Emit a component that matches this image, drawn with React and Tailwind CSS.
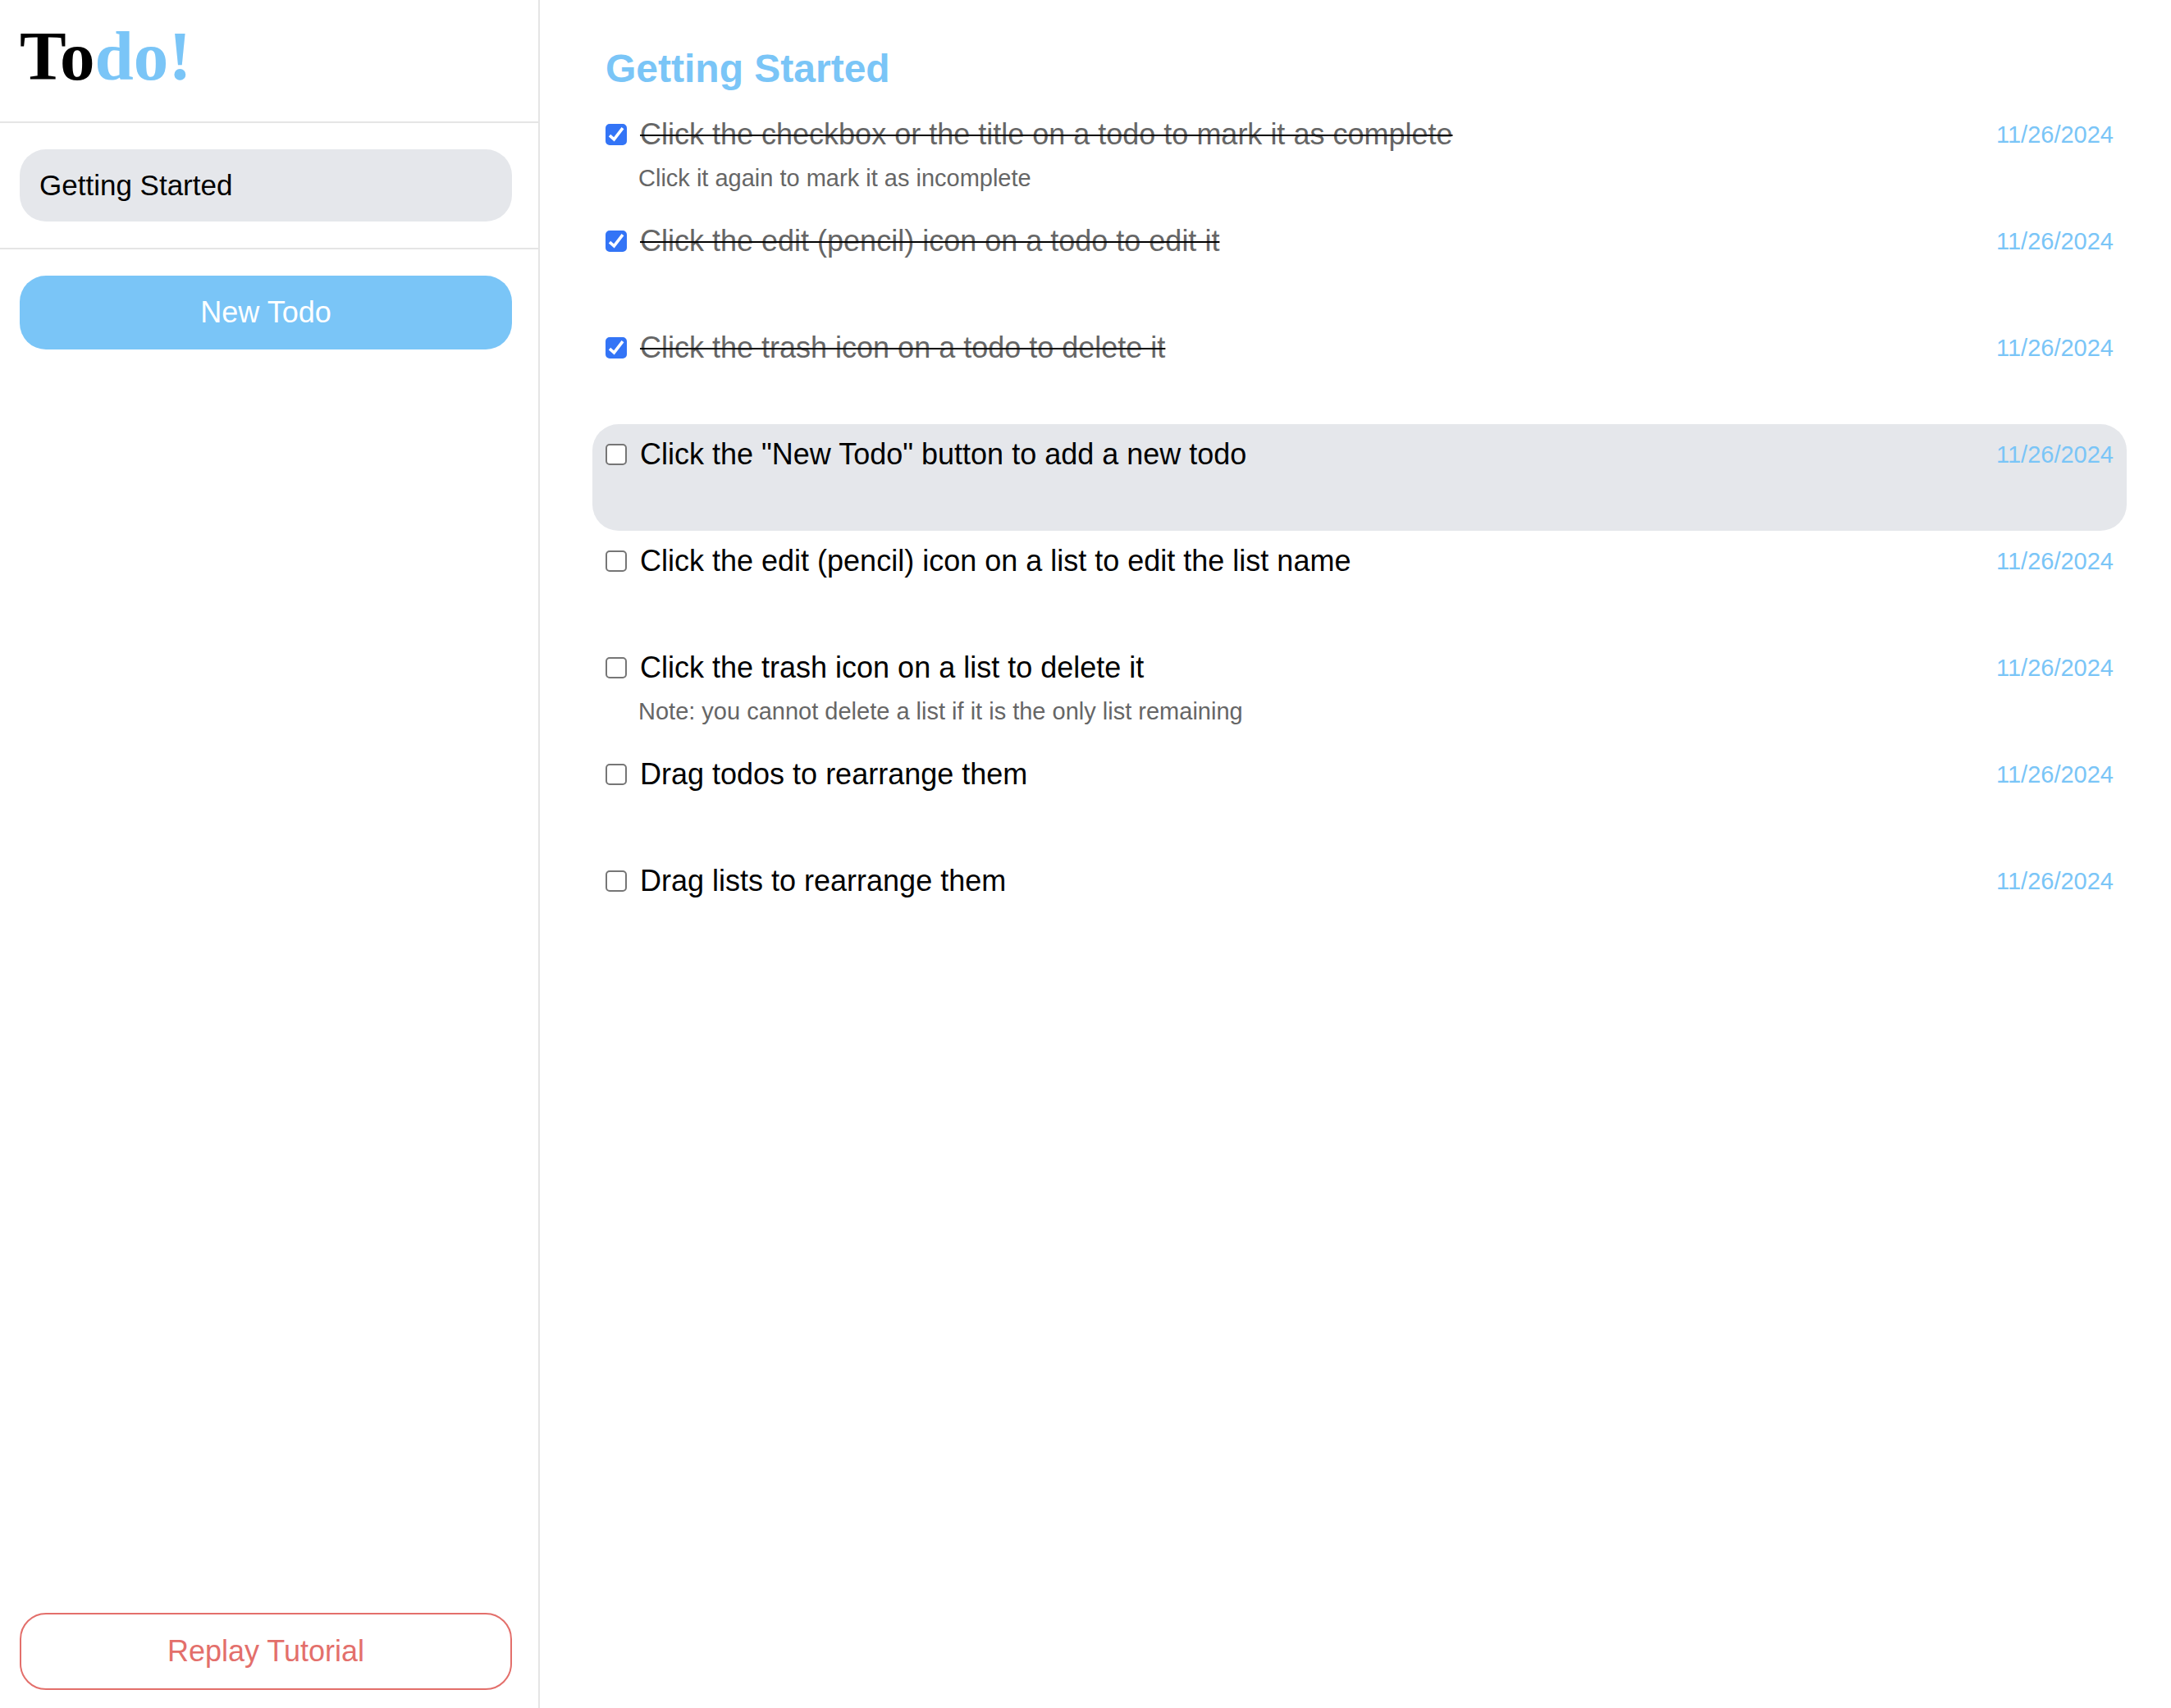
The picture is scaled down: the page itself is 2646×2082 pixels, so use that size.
import { useState } from "react";

const initialTodos = [
  { title: "Click the checkbox or the title on a todo to mark it as complete", note: "Click it again to mark it as incomplete", done: true },
  { title: "Click the edit (pencil) icon on a todo to edit it", done: true },
  { title: "Click the trash icon on a todo to delete it", done: true },
  { title: 'Click the "New Todo" button to add a new todo', active: true },
  { title: "Click the edit (pencil) icon on a list to edit the list name" },
  { title: "Click the trash icon on a list to delete it", note: "Note: you cannot delete a list if it is the only list remaining" },
  { title: "Drag todos to rearrange them" },
  { title: "Drag lists to rearrange them" },
];

function Todo({ id, todo, onToggle }) {
  return (
    <li className={todo.active ? "h-[130px] rounded-[32px] bg-[#e5e7eb] px-4 py-2" : "h-[130px] rounded-[32px] px-4 py-2"}>
      <div className="flex h-[58px] items-center">
        <span className="grid size-[26px] shrink-0">
          <input
            id={id}
            type="checkbox"
            checked={!!todo.done}
            onChange={onToggle}
            className="col-start-1 row-start-1 size-[26px] appearance-none rounded-[5px] border-2 border-[#767676] bg-white checked:border-[#3374f6] checked:bg-[#3374f6]"
          />
          {todo.done && (
            <svg viewBox="0 0 26 26" className="pointer-events-none col-start-1 row-start-1 size-[26px]" fill="none" stroke="white" strokeWidth="3.6">
              <path d="M5 14.2 L10.4 18.8 L21 5.2" />
            </svg>
          )}
        </span>
        <label
          htmlFor={id}
          className={todo.done ? "ml-4 grow text-[36px] leading-[58px] text-[#666666] line-through decoration-black decoration-2" : "ml-4 grow text-[36px] leading-[58px] text-black"}
        >
          {todo.title}
        </label>
        <time dateTime="2024-11-26" className="text-[29px] leading-10 text-[#7ac5f7]">11/26/2024</time>
      </div>
      {todo.note && <p className="mt-1 ml-10 text-[29px] leading-10 text-[#666666]">{todo.note}</p>}
    </li>
  );
}

export default function App() {
  const [todos, setTodos] = useState(initialTodos);
  const toggle = (index) => setTodos(todos.map((t, i) => (i === index ? { ...t, done: !t.done } : t)));

  return (
    <div className="flex min-h-screen bg-white font-['Liberation_Sans',Arial,sans-serif] text-black">
      <aside className="flex w-[658px] shrink-0 flex-col border-r-2 border-[#e5e5e5]">
        <header className="h-[150px] border-b-2 border-[#e5e5e5] px-6 pt-6">
          <h1 className="font-['Liberation_Serif',serif] text-[85px] leading-[88px] font-bold">
            To<span className="text-[#7ac5f7]">do!</span>
          </h1>
        </header>
        <nav className="border-b-2 border-[#e5e5e5] py-8 pr-8 pl-6">
          <button type="button" className="block h-[88px] w-full rounded-[32px] bg-[#e5e7eb] px-6 text-left text-[35px]">
            Getting Started
          </button>
        </nav>
        <div className="flex grow flex-col justify-between pt-8 pr-8 pb-[22px] pl-6">
          <button type="button" className="h-[90px] w-full rounded-[32px] bg-[#7ac5f7] text-[36px] text-white">
            New Todo
          </button>
          <button type="button" className="h-[94px] w-full rounded-[32px] border-2 border-[#e36f6b] text-[36px] text-[#e36f6b]">
            Replay Tutorial
          </button>
        </div>
      </aside>
      <main className="grow pt-14 pr-[54px] pl-16">
        <h2 className="h-[71px] pl-4 text-[48px] leading-[56px] font-bold text-[#7ac5f7]">Getting Started</h2>
        <ul>
          {todos.map((todo, i) => (
            <Todo key={todo.title} id={`todo-${i}`} todo={todo} onToggle={() => toggle(i)} />
          ))}
        </ul>
      </main>
    </div>
  );
}
